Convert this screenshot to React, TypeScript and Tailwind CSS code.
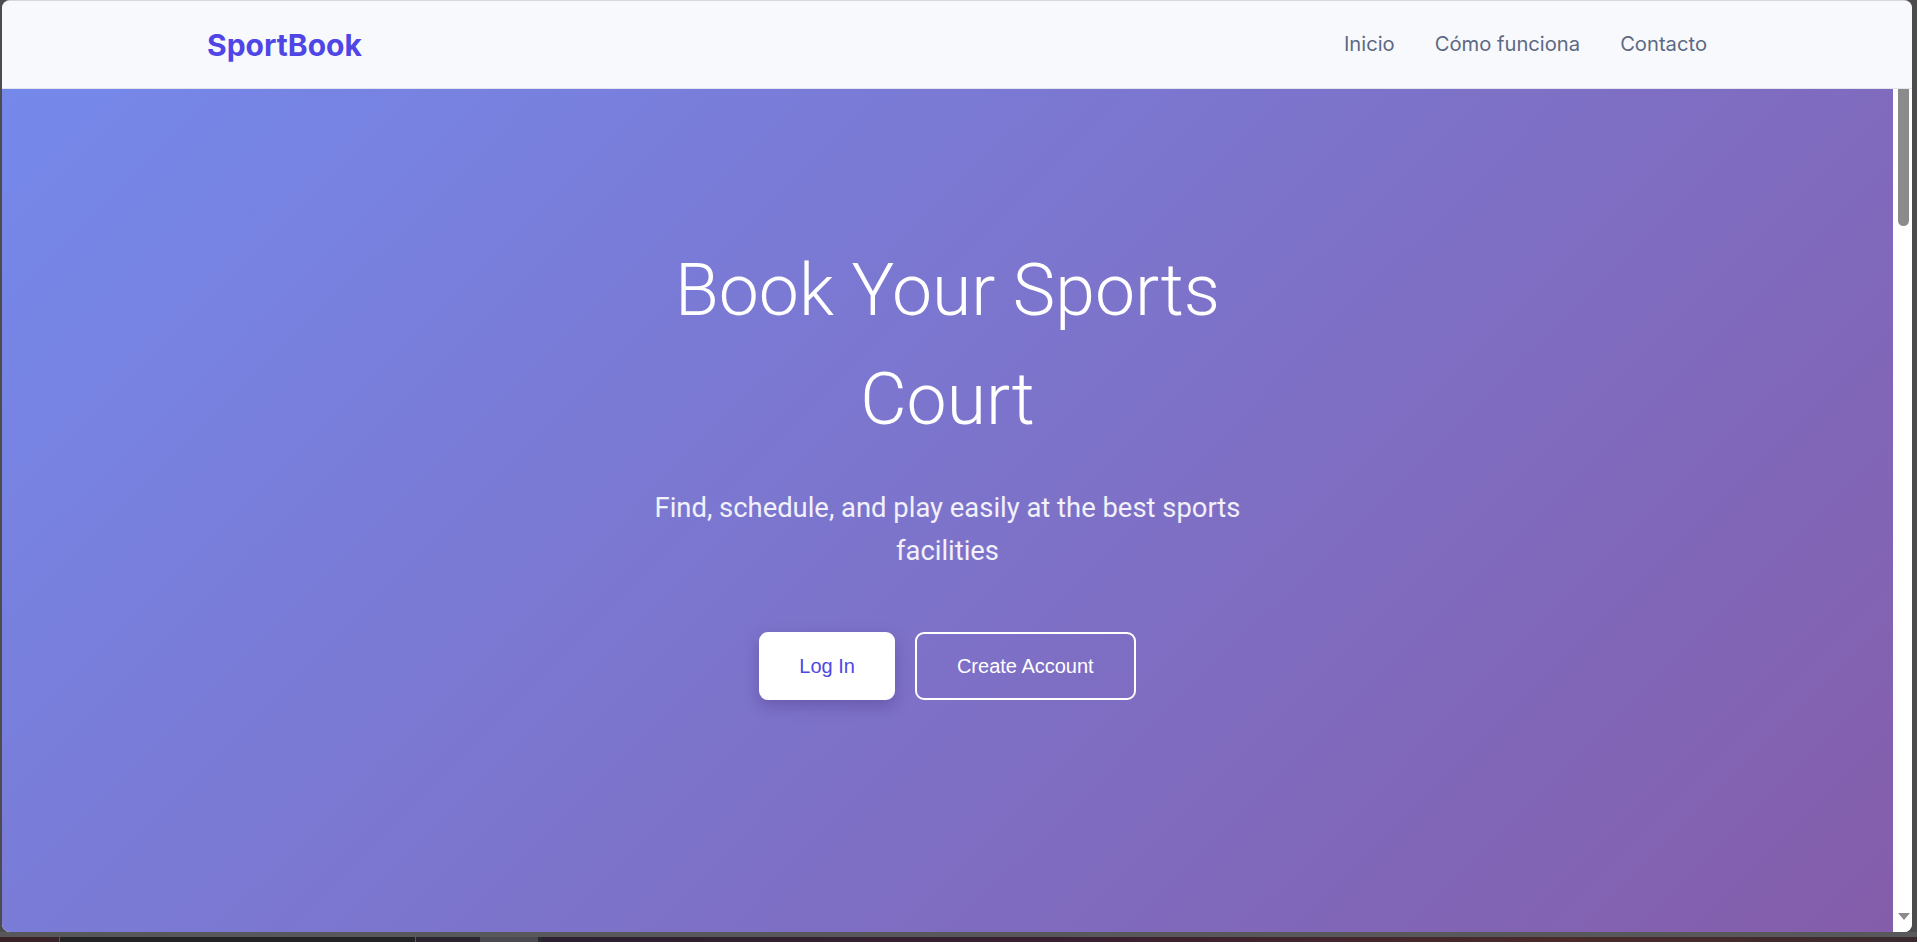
import React from "react";

export default function App() {
  return (
    <div className="w-[1917px] h-[942px] bg-[#4c4c4f] flex flex-col overflow-hidden" style={{ fontFamily: "Inter, 'Noto Sans', sans-serif" }}>
      {/* browser window */}
      <div className="ml-[2px] w-[1910px] h-[932px] rounded-[8px] overflow-hidden flex flex-col bg-white border-t border-[#d8d8dc]">
        {/* header */}
        <header className="h-[88px] shrink-0 bg-[#f8f9fc] border-b border-[#e3e5ec] flex items-center">
          <div className="w-[1500px] mx-auto flex items-center justify-between">
            <div className="text-[30px] font-bold text-[#4f46e5] leading-none">SportBook</div>
            <nav className="flex items-center gap-[40px] text-[20.2px] text-[#5d6983] leading-none">
              <a>Inicio</a>
              <a>Cómo funciona</a>
              <a>Contacto</a>
            </nav>
          </div>
        </header>
        {/* body with scrollbar */}
        <div className="flex-1 flex min-h-0">
          <main className="flex-1 bg-[linear-gradient(135deg,#7589eb_0%,#845daa_100%)] flex flex-col items-center pt-[147px]">
            <div className="w-[600px] flex flex-col items-center text-center">
              <h1 className="text-[71.5px] font-light text-white leading-[109px]" style={{ fontFamily: "Roboto, Inter, sans-serif" }}>
                Book Your Sports Court
              </h1>
              <p className="mt-[33px] text-[27.4px] leading-[43px] text-white/90" style={{ fontFamily: "Roboto, Inter, sans-serif" }}>
                Find, schedule, and play easily at the best sports facilities
              </p>
            </div>
            <div className="mt-[59px] flex gap-[20px]" style={{ fontFamily: "'Liberation Sans', Arial, sans-serif" }}>
              <button className="h-[68px] px-[40px] rounded-[9px] bg-white text-[20px] text-[#4f46e5] shadow-[0_6px_16px_rgba(40,20,90,0.25)]">
                Log In
              </button>
              <button className="h-[68px] px-[40px] rounded-[9px] border-2 border-white text-[20px] text-white">
                Create Account
              </button>
            </div>
          </main>
          {/* scrollbar */}
          <div className="w-[19px] bg-white flex flex-col items-center justify-between pb-[12px]">
            <div className="w-[11px] h-[137px] bg-[#8b8b8b] rounded-b-[6px] ml-[2px]" />
            <div className="w-0 h-0 border-l-[6px] border-r-[6px] border-t-[7px] border-l-transparent border-r-transparent border-t-[#8b8b8b] ml-[2px]" />
          </div>
        </div>
      </div>
      <div className="h-[5px] bg-[#58585b]" />
      <div className="h-[5px] flex">
        <div className="w-[59px] bg-[#3a2229]" />
        <div className="w-[357px] bg-[#232326] border-x border-[#5a5a5e]" />
        <div className="w-[64px] bg-[#2a2330]" />
        <div className="w-[58px] bg-[#4b4950]" />
        <div className="w-[4px] bg-[#2a2a2e]" />
        <div className="flex-1 bg-[linear-gradient(90deg,#2b2030,#3a2030_40%,#4a2a2a_75%,#3a2a30)]" />
      </div>
    </div>
  );
}
